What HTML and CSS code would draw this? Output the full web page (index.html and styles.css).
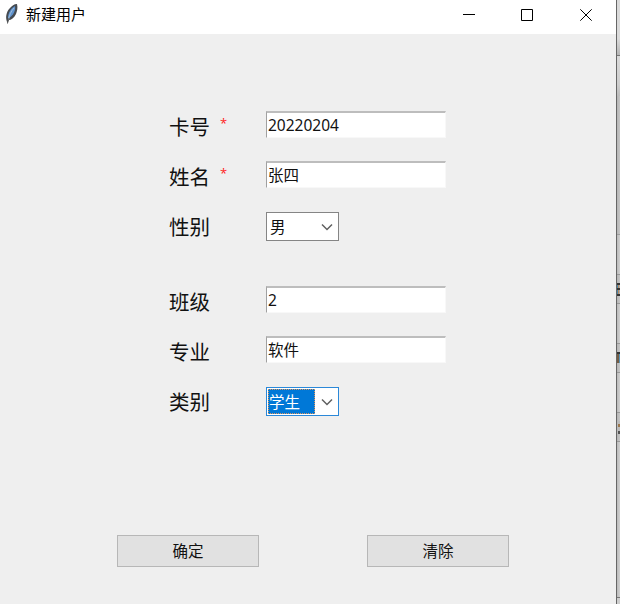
FILE: index.html
```html
<!DOCTYPE html>
<html lang="zh-CN">
<head>
<meta charset="utf-8">
<title>新建用户</title>
<link rel="stylesheet" href="styles.css">
</head>
<body>
<div class="screen">
  <main class="window">
    <header class="titlebar">
      <svg class="feather" width="16" height="20" viewBox="0 0 16 20">
        <path d="M4.500 19C2 14 3 8 7 4c2-2 4-4 7-4 1 4 0 7-1 10-2 4-5 6-7 6z" fill="#454a50"/>
        <path d="M5 14C5 9 8 4 12 2c1 4-2 10-6 12z" fill="#5d92cd"/>
        <path d="M5.500 16C6 12 8 7 11 4" fill="none" stroke="#a4bedb" stroke-width="1"/>
        <path d="M4.500 19.500l1-5" fill="none" stroke="#555" stroke-width="1"/>
      </svg>
      <span class="title">新建用户</span>
      <div class="controls">
        <svg width="12" height="12" viewBox="0 0 12 12"><path d="M0 5.500h12"/></svg>
        <svg width="12" height="12" viewBox="0 0 12 12"><path d="M.5.5h11v11H.5z"/></svg>
        <svg width="12" height="12" viewBox="0 0 12 12"><path d="M.3.300l11.400 11.400M11.700.300L.3 11.700"/></svg>
      </div>
    </header>
    <form class="form">
      <div class="row"><span class="label">卡号</span><span class="star">*</span><div class="input number">20220204</div></div>
      <div class="row"><span class="label">姓名</span><span class="star">*</span><div class="input">张四</div></div>
      <div class="row gap-after"><span class="label">性别</span><span class="star"></span><div class="select"><span class="value">男</span><svg width="12" height="8" viewBox="0 0 12 8"><path d="M1 1.500l5 5 5-5"/></svg></div></div>
      <div class="row"><span class="label">班级</span><span class="star"></span><div class="input number">2</div></div>
      <div class="row"><span class="label">专业</span><span class="star"></span><div class="input">软件</div></div>
      <div class="row"><span class="label">类别</span><span class="star"></span><div class="select focused"><span class="value">学生</span><svg width="12" height="8" viewBox="0 0 12 8"><path d="M1 1.500l5 5 5-5"/></svg></div></div>
    </form>
    <div class="actions">
      <button type="button">确定</button>
      <button type="button">清除</button>
    </div>
  </main>
  <aside class="behind">
    <div class="part top"></div>
    <div class="part toolbar"></div>
    <div class="part space"></div>
    <div class="part line"></div>
    <div class="part cell"><span class="mark bars"></span></div>
    <div class="part line middle"></div>
    <div class="part cell"><span class="mark short"></span></div>
    <div class="part line middle"></div>
    <div class="part cell"><span class="mark hook"></span></div>
    <div class="part line rest"></div>
    <div class="part bottom"></div>
  </aside>
</div>
</body>
</html>
```
FILE: styles.css
```css
* { box-sizing: border-box; }
body {
  margin: 0;
  overflow: hidden;
  font-family: "Noto Sans CJK SC", sans-serif;
  color: #111;
}
.screen { display: flex; width: 620px; height: 604px; background: #c4c4c4; }
.window {
  width: 617px;
  border-right: 1px solid #666;
  background: #efefef;
}
.titlebar {
  display: flex;
  height: 34px;
  padding-left: 3px;
  background: #fff;
}
.feather { margin-top: 4px; }
.title { margin-left: 7px; font-size: 15px; line-height: 28px; color: #000; }
.controls {
  display: flex;
  gap: 47px;
  margin: 9px 24px 0 auto;
}
.controls svg { fill: none; stroke: #000; stroke-width: 1; }
.controls svg:first-child { margin-right: -1px; }
.form { padding: 77px 0 0 169px; }
.row {
  display: grid;
  grid-template-columns: 50px 47px 181px;
  align-items: start;
  height: 50px;
}
.gap-after { height: 75px; }
.label { font-size: 20.500px; line-height: 30px; }
.star {
  padding-left: 1px;
  font-family: "Open Sans", sans-serif;
  font-size: 13px;
  line-height: 24px;
  color: #ff2020;
}
.input {
  width: 180px;
  height: 27px;
  padding-left: 1px;
  border: 1px solid #f8f8f8;
  border-top: 2px solid #bdbdbd;
  border-left: 1px solid #a0a0a0;
  background: #fff;
  font-size: 15.500px;
  line-height: 22px;
}
.number { font-family: "Noto Sans", sans-serif; font-size: 15.500px; line-height: 24px; }
.select {
  display: flex;
  align-items: center;
  width: 73px;
  height: 29px;
  margin-top: 1px;
  padding: 1px 5px 1px 1px;
  border: 1px solid #858585;
  background: #fff;
}
.select svg { margin-left: auto; fill: none; stroke: #606060; stroke-width: 1.500; }
.value {
  width: 47px;
  height: 25px;
  padding-left: 1px;
  border: 1px solid transparent;
  font-size: 15.500px;
  line-height: 22px;
}
.focused { border-color: #2b88d8; }
.focused .value { padding-left: 0; background: #0078d7; border: 1px dotted #dc955e; color: #fff; }
.actions {
  display: flex;
  gap: 108px;
  padding: 99px 0 0 117px;
}
button {
  width: 142px;
  height: 32px;
  padding: 0 0 2px;
  border: 1px solid #b7b7b7;
  background: #e1e1e1;
  color: #111;
  font: 15.500px/28px "Noto Sans CJK SC", sans-serif;
}
.behind { width: 3px; }
.top { height: 56px; border-bottom: 1px solid #777; background: linear-gradient(#dadada 70%, #b5b5b5); }
.toolbar { height: 40px; background: linear-gradient(#d9d9d9, #cecece 70%, #bcbcbc); }
.space { height: 138px; background: linear-gradient(90deg, #b6b6b6, #c4c4c4); }
.line { height: 40px; border-top: 1px solid #9e9e9e; background: linear-gradient(90deg, #bbb, #cfcfcf); }
.cell {
  height: 30px;
  padding-top: 8px;
  border: solid #999;
  border-width: 1px 0;
  background: linear-gradient(90deg, #b6b6b6, #c5c5c5);
}
.middle { height: 39px; border-top: 0; }
.rest { height: 155px; border: 0; }
.bottom { height: 8px; border-top: 1px solid #777; background: #cecece; }
.mark { display: block; width: 3px; height: 13px; }
.bars {
  background:
    linear-gradient(#343434 2px, transparent 2px 5px, #343434 5px 7px, transparent 7px 11px, #343434 11px),
    linear-gradient(90deg, #4d88aa 33%, #b68b62 33% 66%, #aaa 66%);
}
.short { height: 11px; border-top: 2px solid #343434; background: linear-gradient(90deg, #765d44 50%, #5794b7 50%); }
.hook {
  background: linear-gradient(90deg, #bbb 33%, transparent 33%),
    linear-gradient(#bbb 3px, #9c784e 3px 6px, #bbb 6px 10px, #555 10px);
}
```
